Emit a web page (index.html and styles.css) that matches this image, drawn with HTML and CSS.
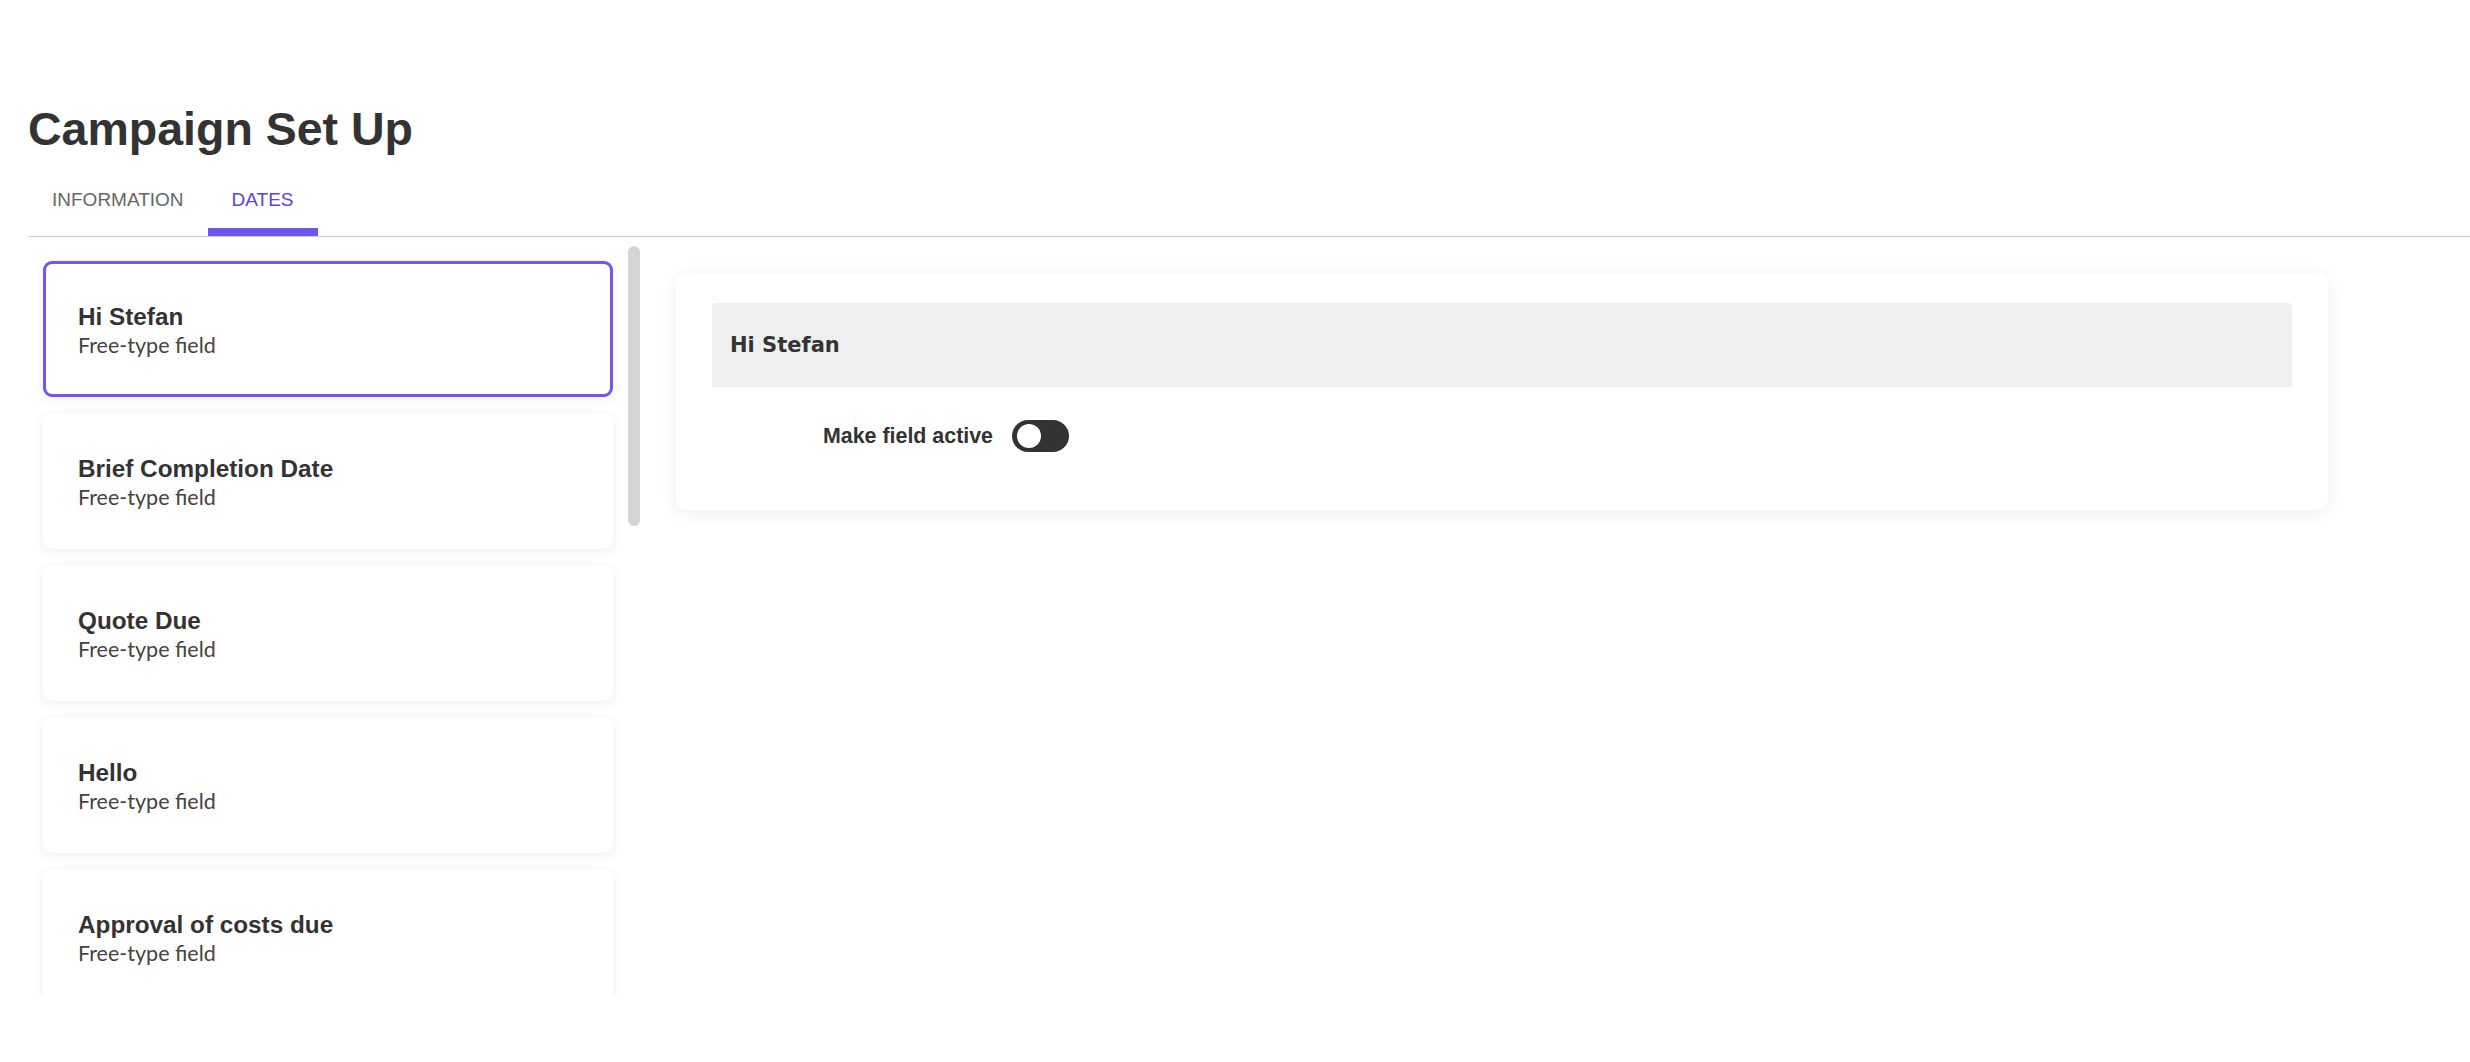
FILE: index.html
```html
<!DOCTYPE html>
<html lang="en">
<head>
  <meta charset="UTF-8">
  <meta name="viewport" content="width=device-width, initial-scale=1">
  <title>Campaign Set Up</title>
  <link rel="stylesheet" href="styles.css">
</head>
<body>

<div class="page">
  <h1 class="page-title">Campaign Set Up</h1>

  <nav class="tabs">
    <a href="#" class="tab">INFORMATION</a>
    <a href="#" class="tab active">DATES</a>
  </nav>

  <div class="content">
    <aside class="field-list-wrap">
      <div class="field-list">
        <div class="field-card selected">
          <div class="field-name">Hi Stefan</div>
          <div class="field-type">Free-type field</div>
        </div>
        <div class="field-card">
          <div class="field-name">Brief Completion Date</div>
          <div class="field-type">Free-type field</div>
        </div>
        <div class="field-card">
          <div class="field-name">Quote Due</div>
          <div class="field-type">Free-type field</div>
        </div>
        <div class="field-card">
          <div class="field-name">Hello</div>
          <div class="field-type">Free-type field</div>
        </div>
        <div class="field-card">
          <div class="field-name">Approval of costs due</div>
          <div class="field-type">Free-type field</div>
        </div>
      </div>
      <div class="scrollbar"><div class="scroll-thumb"></div></div>
    </aside>

    <section class="panel">
      <div class="panel-header">Hi Stefan</div>
      <div class="toggle-row">
        <span class="toggle-label">Make field active</span>
        <span class="toggle"><span class="knob"></span></span>
      </div>
    </section>
  </div>
</div>

</body>
</html>
```

FILE: styles.css
```css
body {
  margin: 0;
  font-family: 'Liberation Sans', Arial, sans-serif;
  color: #333;
  background: #fff;
}
.page {
  padding-left: 28px;
}
.page-title {
  margin: 101px 0 0;
  font-size: 46.5px;
  line-height: 56px;
  font-weight: bold;
  color: #333;
}

/* tabs */
.tabs {
  display: flex;
  border-bottom: 1px solid #cfcfcf;
}
.tab {
  display: block;
  padding: 32px 24px 25px;
  font-size: 19px;
  line-height: 22px;
  color: #666;
  text-decoration: none;
}
.tab.active {
  color: #5a45d4;
  padding-bottom: 17px;
  border-bottom: 8px solid #7153f2;
}

.content {
  display: flex;
  align-items: flex-start;
  gap: 36px;
}

/* left list */
.field-list-wrap {
  display: flex;
  margin-top: 9px;
  height: 749px;
}
.field-list {
  width: 570px;
  padding: 15px;
  overflow: hidden;
  display: flex;
  flex-direction: column;
  gap: 16px;
}
.field-card {
  flex: none;
  box-sizing: border-box;
  height: 136px;
  padding: 3px 32px 0;
  border: 3px solid transparent;
  border-radius: 9px;
  background: #fff;
  box-shadow: 0 2px 12px rgba(0,0,0,0.07);
  display: flex;
  flex-direction: column;
  justify-content: center;
}
.field-card.selected {
  border-color: #7356f1;
}
.field-name {
  font-size: 24.3px;
  line-height: 28px;
  font-weight: bold;
  color: #333;
}
.field-type {
  font-family: 'Lato', sans-serif;
  font-size: 21.5px;
  line-height: 28px;
  color: #444;
}
.scrollbar {
  width: 12px;
}
.scroll-thumb {
  height: 280px;
  border-radius: 6px;
  background: #d5d5d5;
}

/* right panel */
.panel {
  margin-top: 36px;
  width: 1580px;
  padding: 30px 36px 58px;
  background: #fff;
  border-radius: 10px;
  box-shadow: 0 3px 18px rgba(0,0,0,0.07);
}
.panel-header {
  height: 84px;
  display: flex;
  align-items: center;
  padding-left: 18px;
  background: #efefef;
  border-radius: 4px 4px 0 0;
  font-family: 'DejaVu Sans', sans-serif;
  font-weight: 700;
  font-size: 21px;
  color: #333;
}
.toggle-row {
  display: flex;
  align-items: center;
  gap: 19px;
  margin-top: 33px;
  padding-left: 111px;
}
.toggle-label {
  font-size: 21.4px;
  font-weight: bold;
  color: #333;
}
.toggle {
  box-sizing: border-box;
  width: 57px;
  height: 32px;
  padding: 4px 5px;
  border-radius: 16px;
  background: #333;
  display: flex;
  align-items: center;
}
.knob {
  width: 24px;
  height: 24px;
  border-radius: 50%;
  background: #fff;
}
```
